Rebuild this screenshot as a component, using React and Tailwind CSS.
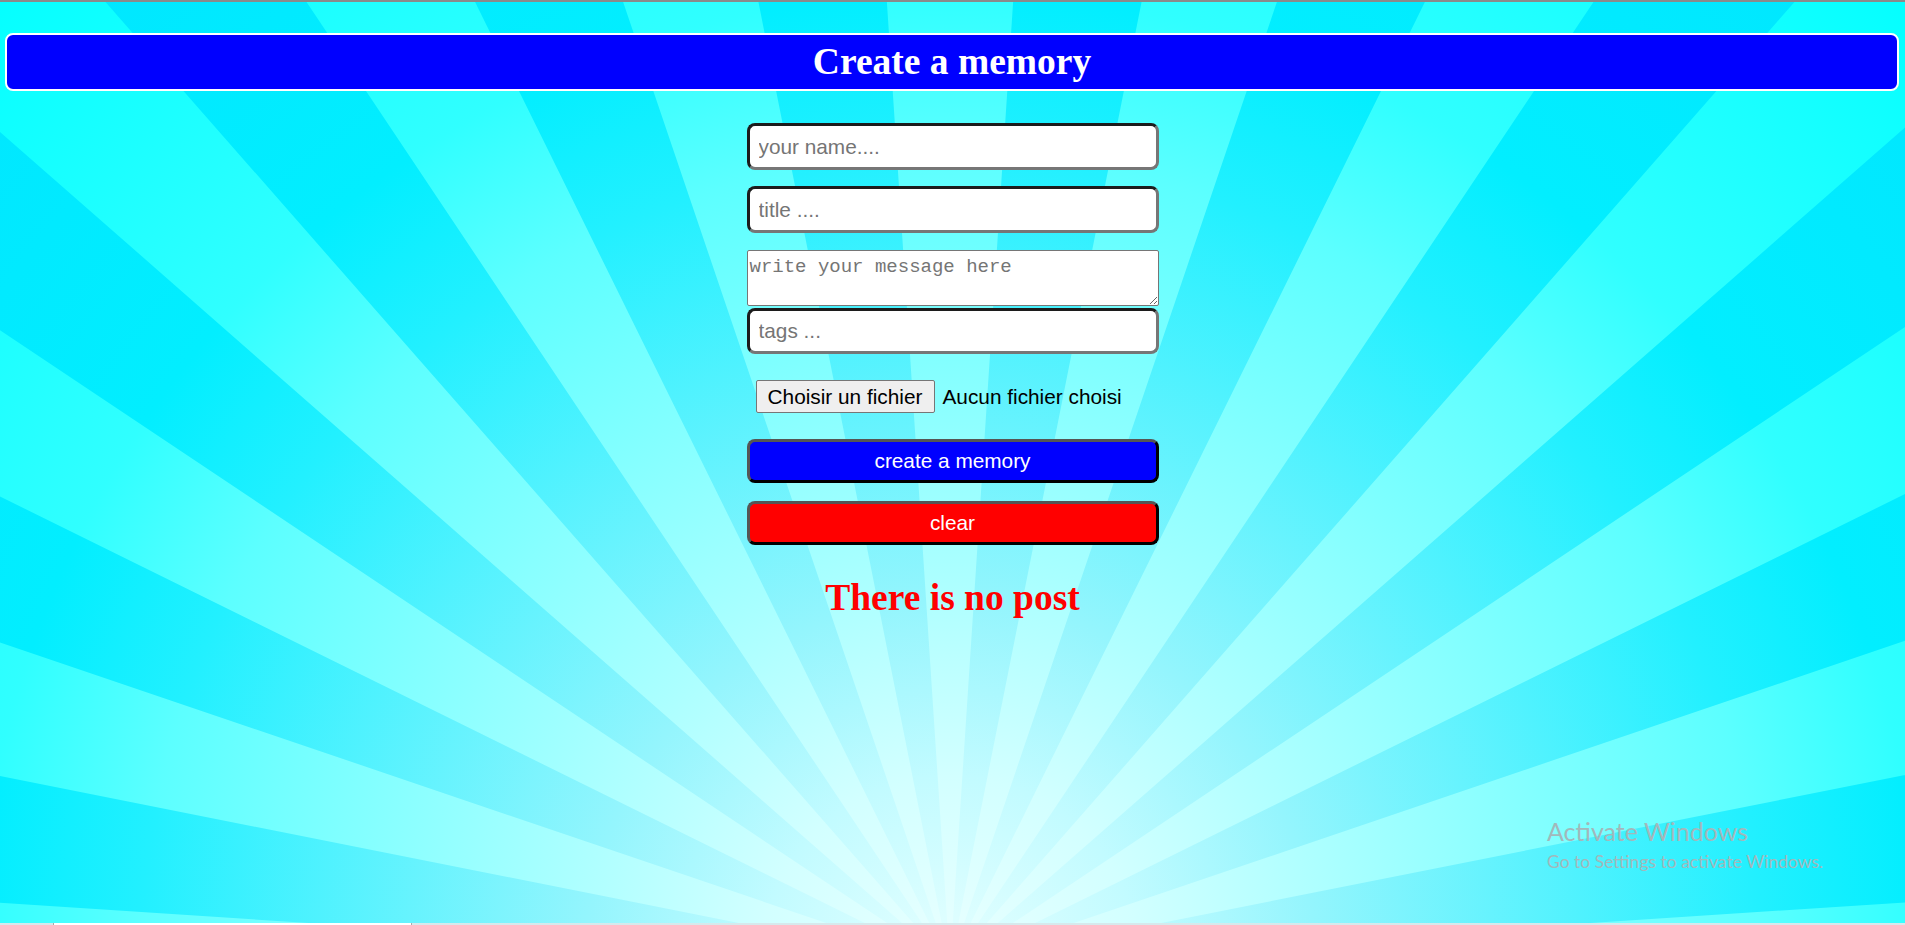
import React from 'react';

// sunburst center, a bit below the window, and 48 stripes of 7.5deg
const CX = 950;
const CY = 965;
const R = 3000;

function rayPath() {
  let d = '';
  for (let k = 0; k < 48; k++) {
    if (k % 2 === 0) continue;
    const a1 = ((k * 7.5 - 3.75) * Math.PI) / 180;
    const a2 = ((k * 7.5 + 3.75) * Math.PI) / 180;
    const x1 = CX + R * Math.sin(a1);
    const y1 = CY - R * Math.cos(a1);
    const x2 = CX + R * Math.sin(a2);
    const y2 = CY - R * Math.cos(a2);
    d += `M${CX} ${CY}L${x1.toFixed(1)} ${y1.toFixed(1)}L${x2.toFixed(1)} ${y2.toFixed(1)}Z`;
  }
  return d;
}

function Sunburst() {
  return (
    <svg className="absolute inset-0 h-full w-full" viewBox="0 0 1905 925" preserveAspectRatio="none">
      <defs>
        <radialGradient id="lite" gradientUnits="userSpaceOnUse" cx={CX} cy={CY} r="1350">
          <stop offset="0" stopColor="#eaffff" />
          <stop offset="0.14" stopColor="#d2ffff" />
          <stop offset="0.27" stopColor="#b0ffff" />
          <stop offset="0.6" stopColor="#5cffff" />
          <stop offset="0.72" stopColor="#30ffff" />
          <stop offset="1" stopColor="#05ffff" />
        </radialGradient>
        <radialGradient id="dark" gradientUnits="userSpaceOnUse" cx={CX} cy={CY} r="1350">
          <stop offset="0" stopColor="#e6ffff" />
          <stop offset="0.14" stopColor="#c2fbff" />
          <stop offset="0.27" stopColor="#94f5fd" />
          <stop offset="0.6" stopColor="#22f0ff" />
          <stop offset="0.72" stopColor="#02eeff" />
          <stop offset="1" stopColor="#00e6ff" />
        </radialGradient>
      </defs>
      <rect x="0" y="0" width="1905" height="925" fill="url(#lite)" />
      <path d={rayPath()} fill="url(#dark)" />
    </svg>
  );
}

const inputCls =
  'w-full rounded-[8px] border-[3px] border-t-[#1c1c1c] border-l-[#1c1c1c] border-r-[#767676] border-b-[#767676] bg-white px-[9px] text-[20.8px] text-black outline-none placeholder:text-[#757575]';

const btnCls =
  'h-[44px] w-full rounded-[8px] border-[3px] border-t-[#555555] border-l-[#555555] border-r-black border-b-black text-[20.8px] text-white';

export default function App() {
  return (
    <div className="relative h-screen overflow-hidden font-['Liberation_Sans',Arial,sans-serif]">
      <Sunburst />

      <div className="relative h-[2px] bg-[#8a8a8a]" />

      {/* Title bar */}
      <header className="relative ml-[5px] mr-[6px] mt-[31px] flex h-[58px] items-center justify-center rounded-[8px] border-2 border-white bg-[#0000ff]">
        <h1 className="font-['Liberation_Serif',serif] text-[37.5px] font-bold leading-[42px] text-white">Create a memory</h1>
      </header>

      {/* Form */}
      <main className="relative mx-auto mt-[32px] flex w-[412px] flex-col">
        <input className={`h-[47px] ${inputCls}`} placeholder="your name...." />
        <input className={`mt-[16px] h-[47px] ${inputCls}`} placeholder="title ...." />
        <textarea
          className="mt-[17px] h-[56px] w-full rounded-[2px] border border-[#767676] bg-white px-[2px] pb-[2px] pt-[5px] font-['Liberation_Mono',monospace] text-[19px] leading-[22px] text-black outline-none placeholder:text-[#757575]"
          placeholder="write your message here"
        />
        <input className={`mt-[2px] h-[46px] ${inputCls}`} placeholder="tags ..." />

        <div className="mt-[26px] flex h-[33px] items-center pl-[9px] text-[20.8px] text-black">
          <button className="h-[33px] w-[179px] rounded-[2px] border border-[#767676] bg-[#efefef]">Choisir un fichier</button>
          <span className="ml-[8px]">Aucun fichier choisi</span>
        </div>

        <button className={`mt-[26px] bg-[#0000ff] ${btnCls}`}>create a memory</button>
        <button className={`mt-[18px] bg-[#ff0000] ${btnCls}`}>clear</button>

        <h2 className="mt-[32px] text-center font-['Liberation_Serif',serif] text-[37.5px] font-bold leading-[42px] text-[#ff0000]">
          There is no post
        </h2>
      </main>

      {/* OS watermark */}
      <div className="absolute left-[1547px] top-[816px] flex flex-col font-['Lato',sans-serif] text-[#a2b8bb]">
        <span className="text-[25px] leading-[30px]">Activate Windows</span>
        <span className="mt-[5px] text-[17.5px] leading-[21px]">Go to Settings to activate Windows.</span>
      </div>

      {/* bottom edge */}
      <div className="absolute bottom-0 left-0 right-0 flex h-[2px] bg-[#d6e9ec]">
        <div className="ml-[53px] w-[359px] border-x border-[#a9a9a9] bg-white" />
      </div>
    </div>
  );
}
